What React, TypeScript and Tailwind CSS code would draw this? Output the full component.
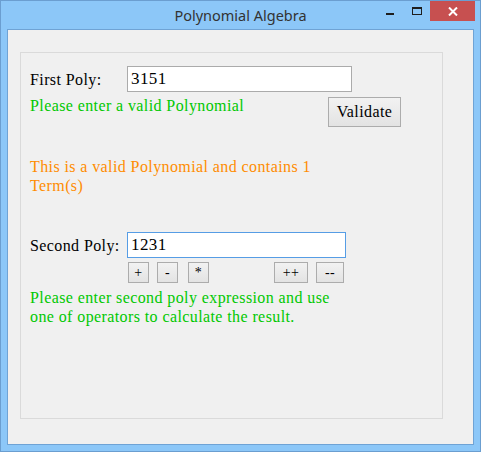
const serif = { fontFamily: '"Liberation Serif", "DejaVu Serif", serif' };

const OpButton = ({ label, className }: { label: string; className: string }) => (
  <button
    className={`h-[21px] border border-[#acacac] bg-gradient-to-b from-[#f2f2f2] to-[#e3e3e3] text-[14px] leading-none text-black flex items-end justify-center pb-[2px] ${className}`}
  >
    {label}
  </button>
);

export default function App() {
  return (
    <div className="w-[481px] h-[452px] bg-[#8cc7f8] border border-[#6b9ed0] flex flex-col overflow-hidden">
      {/* title bar */}
      <div className="h-[28px] grid grid-cols-[1fr_auto_1fr] shrink-0">
        <div />
        <div
          className="text-[14.5px] text-[#333] pt-[4px] leading-[20px]"
          style={{ fontFamily: '"Noto Sans", "Open Sans", sans-serif' }}
        >
          Polynomial Algebra
        </div>
        <div className="flex justify-end items-start pr-[5px]">
          <div className="w-[8px] h-[2px] bg-[#1e1e1e] mt-[12px]" />
          <div className="w-[10px] h-[8px] border border-t-2 border-[#1e1e1e] mt-[6px] ml-[18px]" />
          <div className="w-[45px] h-[20px] bg-[#c75050] ml-[8px] flex items-center justify-center">
            <svg width="10" height="9" viewBox="0 0 10 9">
              <path d="M1 0.5 L9 8.5 M9 0.5 L1 8.5" stroke="#fff" strokeWidth="2" />
            </svg>
          </div>
        </div>
      </div>

      {/* client area */}
      <div className="flex-1 mx-[6px] mb-[6px] border border-[#6fa3d5] bg-[#f0f0f0] pt-[22px] pl-[12px] pr-[30px] pb-[25px]" style={serif}>
        <div className="h-full border border-[#dadada] pl-[9px] pt-[13px] text-[16px] tracking-[0.4px] text-black">
          {/* first poly */}
          <div className="flex items-center h-[26px]">
            <span className="w-[97px] leading-[19px]">First Poly:</span>
            <div className="w-[225px] h-[26px] border border-[#ababab] bg-white flex items-center pl-[3px] text-[17px]">
              3151
            </div>
          </div>

          <div className="flex mt-[4px]">
            <span className="w-[298px] leading-[19px] text-[#00c800]">Please enter a valid Polynomial</span>
            <button className="w-[73px] h-[30px] mt-[1px] border border-[#acacac] bg-gradient-to-b from-[#f2f2f2] to-[#e3e3e3] text-black">
              Validate
            </button>
          </div>

          <p className="mt-[30px] leading-[19px] text-[#ff8c00]">
            This is a valid Polynomial and contains 1
            <br />
            Term(s)
          </p>

          {/* second poly */}
          <div className="flex items-center h-[26px] mt-[37px]">
            <span className="w-[97px] leading-[19px]">Second Poly:</span>
            <div className="w-[219px] h-[26px] border border-[#569de5] bg-white flex items-center pl-[3px] text-[17px]">
              1231
            </div>
          </div>

          <div className="flex mt-[4px]">
            <OpButton label="+" className="w-[21px] ml-[98px]" />
            <OpButton label="-" className="w-[21px] ml-[8px]" />
            <OpButton label="*" className="w-[21px] ml-[10px]" />
            <OpButton label="++" className="w-[34px] ml-[65px]" />
            <OpButton label="--" className="w-[28px] ml-[8px]" />
          </div>

          <p className="mt-[5px] leading-[19px] text-[#00c800]">
            Please enter second poly expression and use
            <br />
            one of operators to calculate the result.
          </p>
        </div>
      </div>
    </div>
  );
}
